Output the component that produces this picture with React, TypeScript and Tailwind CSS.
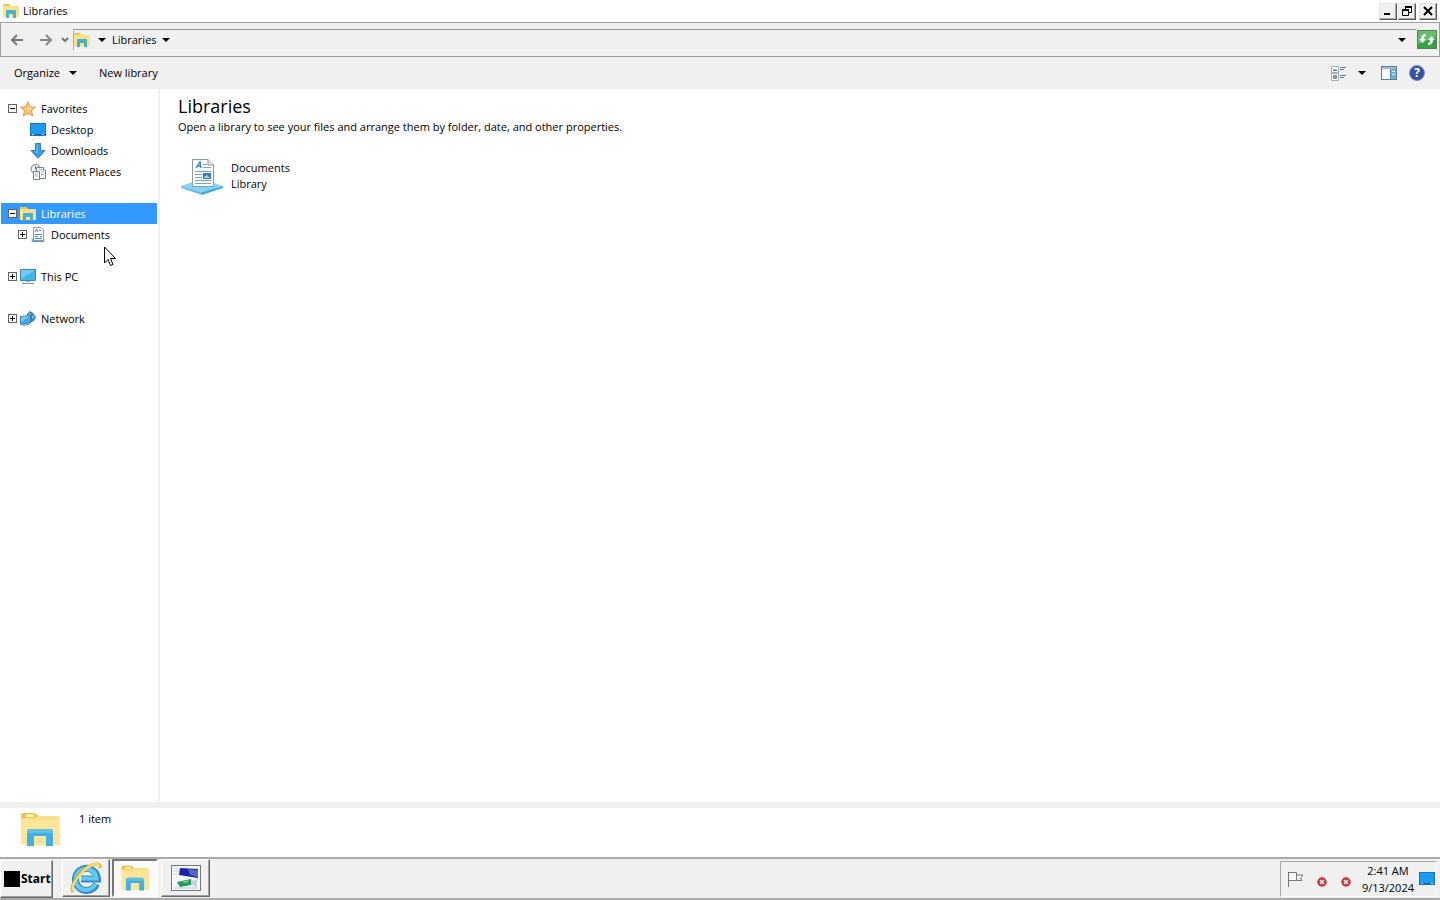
import type { ReactNode } from "react";

function FolderIcon({ className }: { className: string }) {
  return (
    <svg viewBox="0 0 40 36" className={className} preserveAspectRatio="none" aria-hidden="true">
      <path d="M1 3Q1 1 4 1H14L18 4H38Q40 4 40 7V31Q40 33 38 33H1Z" fill="#fbe08c" />
      <path d="M1 8H40V31Q40 33 38 33H1Z" fill="#fde69a" />
      <path d="M1 3Q1 1 4 1H14L19 4L14 6H1Z" fill="#e8c24e" />
      <path d="M6 2.5H13L15 4L13 5H6Z" fill="#fff3bd" />
      <path d="M7 20Q7 17 10 17H30Q33 17 33 20V34H26V24H14V34H7Z" fill="#3eb2e4" />
      <path d="M7 20Q7 17 10 17H30Q33 17 33 20V21H7Z" fill="#62bfe0" />
    </svg>
  );
}

function SmallFolderIcon() {
  return (
    <svg viewBox="0 0 16 14" className="h-[14px] w-4 shrink-0" aria-hidden="true">
      <path d="M0 1Q0 0 1 0H6L8 2H15Q16 2 16 3V13H0Z" fill="#fde08a" />
      <path d="M0 1Q0 0 1 0H6L7 1L6 2H0Z" fill="#edc656" />
      <path d="M3 7Q3 6 4 6H12Q13 6 13 7V14H10V10H6V14H3Z" fill="#45b3cf" />
    </svg>
  );
}

function Caret() {
  return (
    <svg viewBox="0 0 8 4" className="h-1 w-2 shrink-0" aria-hidden="true">
      <path d="M0 0H8L4 4Z" fill="#000" />
    </svg>
  );
}

function StarIcon() {
  return (
    <svg viewBox="0 0 16 16" className="size-4 shrink-0" aria-hidden="true">
      <path d="M8 .8L10.1 5.8L15.5 6.2L11.4 9.7L12.8 15L8 12.2L3.2 15L4.6 9.7L.5 6.2L5.9 5.8Z" fill="#ffc673" stroke="#dc9a4c" />
      <path d="M8 3L9.3 6.8L13 7L8 9Z" fill="#ffe0a8" />
    </svg>
  );
}

function DesktopIcon({ className }: { className: string }) {
  return (
    <svg viewBox="0 0 16 16" className={className} aria-hidden="true">
      <rect x=".5" y="1.5" width="15" height="12" fill="#1c9cf0" stroke="#1779bd" />
      <path d="M1 12H15V13H1Z" fill="#0d67aa" />
      <path d="M2 12H4V13H2ZM12 12H14V13H12Z" fill="#a3d8ff" />
    </svg>
  );
}

function DownloadIcon() {
  return (
    <svg viewBox="0 0 16 16" className="size-4 shrink-0" aria-hidden="true">
      <path d="M5.5 .5H10.5V7.5H15L8 15.3L1 7.5H5.5Z" fill="#3b9be5" stroke="#2b82c9" />
      <path d="M6.5 1.5H8V11L4 8.5H6.5Z" fill="#65b6ef" />
    </svg>
  );
}

function RecentIcon() {
  return (
    <svg viewBox="0 0 16 16" className="size-4 shrink-0" fill="none" stroke="#718092" aria-hidden="true">
      <circle cx="5.5" cy="5" r="4.5" fill="#edf2f5" />
      <path d="M5.5 2V5H8" />
      <path d="M6.5 3.5H13.5V6H15.5V14.5H8.5V12.5H6.5Z" fill="#f7fafc" />
      <path d="M3.5 7.5H9.5V15.5H3.5Z" fill="#fff" />
      <path d="M5 10H8M5 12H8M11 8H14M11 10.5H14M9 5.5H12" stroke="#8eaed0" />
    </svg>
  );
}

function DocumentIcon() {
  return (
    <svg viewBox="0 0 16 16" className="size-4 shrink-0" aria-hidden="true">
      <path d="M1 13L3 11H13L15 13L13 15H3Z" fill="#74c6ed" />
      <path d="M3.5 .5H11L13.5 3V13.5H3.5Z" fill="#f7fbff" stroke="#8a9bae" />
      <path d="M5 5L6.5 2L8 5M9 3.5H11M5 7.5H12M5 9.5H8M5 11.5H12M10 9.5H12" fill="none" stroke="#4588bd" />
      <path d="M2 14.5H14" stroke="#5699bd" />
    </svg>
  );
}

function ComputerIcon() {
  return (
    <svg viewBox="0 0 16 16" className="size-4 shrink-0" aria-hidden="true">
      <path d="M.5 .5H15.5V11.5H.5Z" fill="#40b3ed" stroke="#4687ae" />
      <path d="M1 1H15L1 10Z" fill="#71caf3" />
      <path d="M6 12H10V13H6Z" fill="#a4b7c2" />
      <path d="M2 14.5H14" stroke="#6b9db8" />
    </svg>
  );
}

function NetworkIcon() {
  return (
    <svg viewBox="0 0 16 16" className="size-4 shrink-0" aria-hidden="true">
      <path d="M7 3L10 0L13 2L16 6L14 10L9 12L6 8Z" fill="#3682b5" />
      <path d="M8 3L10 2L11 4L9 5ZM12 5L14 4L14 7L12 8Z" fill="#78bce0" />
      <path d="M.5 5.5L10.5 4.5V12L.5 13.5Z" fill="#43abe5" stroke="#397fae" />
      <path d="M1 6L10 5L1 11Z" fill="#79c9f2" />
      <path d="M3 14.5L9 13.5" stroke="#5b8bac" />
    </svg>
  );
}

function LibraryIcon() {
  return (
    <svg viewBox="0 0 44 38" className="h-[38px] w-11 shrink-0" aria-hidden="true">
      <path d="M1 29L22 22L43 29L22 35Z" fill="#83d3f5" />
      <path d="M1 29L22 35V38L1 31Z" fill="#67bfe5" />
      <path d="M22 35L43 29V31L22 38Z" fill="#43a9d8" />
      <path d="M12.5 2.5H28L33.5 8V29.5H12.5Z" fill="#fafcff" stroke="#8f999f" />
      <path d="M28 2.5V8H33.5" fill="#dce4ea" stroke="#8f999f" />
      <path d="M16 11L20 5L21 11M17 9H21" fill="none" stroke="#3184bc" strokeWidth="1.3" />
      <path d="M23 7.5H27M23 10.5H31M15 14.5H31M15 17.5H22M15 20.5H22M15 23.5H31M15 26.5H31" stroke="#74aac8" />
      <path d="M23 16H31V22H23Z" fill="#397daf" />
      <path d="M24 20L27 18L30 21H24Z" fill="#a7d4d7" />
    </svg>
  );
}

function Expander({ open }: { open: boolean }) {
  return (
    <svg viewBox="0 0 9 9" className="size-[9px] shrink-0" aria-hidden="true">
      <rect x=".5" y=".5" width="8" height="8" fill="#fff" stroke="#626262" />
      <path d={open ? "M2 4.5H7" : "M2 4.5H7M4.5 2V7"} stroke="#000" />
    </svg>
  );
}

type Node = { label: string; icon: ReactNode; open?: boolean; nested?: boolean; selected?: boolean };

const groups: Node[][] = [
  [
    { label: "Favorites", icon: <StarIcon />, open: true },
    { label: "Desktop", icon: <DesktopIcon className="size-4 shrink-0" />, nested: true },
    { label: "Downloads", icon: <DownloadIcon />, nested: true },
    { label: "Recent Places", icon: <RecentIcon />, nested: true },
  ],
  [
    { label: "Libraries", icon: <SmallFolderIcon />, open: true, selected: true },
    { label: "Documents", icon: <DocumentIcon />, open: false, nested: true },
  ],
  [{ label: "This PC", icon: <ComputerIcon />, open: false }],
  [{ label: "Network", icon: <NetworkIcon />, open: false }],
];

function TreeRow({ node }: { node: Node }) {
  return (
    <button
      type="button"
      className={`flex h-[21px] w-full items-center text-left ${node.nested ? "pl-[17px]" : "pl-[7px]"} ${node.selected ? "bg-[#3399ff] text-white" : ""}`}
    >
      <span className="flex w-3 shrink-0">{node.open !== undefined && <Expander open={node.open} />}</span>
      {node.icon}
      <span className="ml-[5px]">{node.label}</span>
    </button>
  );
}

function WindowButton({ label, children }: { label: string; children: ReactNode }) {
  return (
    <button
      type="button"
      aria-label={label}
      className="flex h-[17px] w-[18px] items-center justify-center border border-t-[#e4e4e4] border-r-[#555] border-b-[#555] border-l-[#e4e4e4] bg-[#f0f0f0] shadow-[inset_-1px_-1px_#aaa]"
    >
      <svg viewBox="0 0 12 12" className="size-3" fill="none" stroke="#000" aria-hidden="true">
        {children}
      </svg>
    </button>
  );
}

const raised = "border border-t-white border-r-[#696969] border-b-[#696969] border-l-white bg-[#f0f0f0] shadow-[inset_-1px_-1px_#a0a0a0]";

function ErrorBadge() {
  return (
    <svg viewBox="0 0 10 10" className="size-[10px]" aria-hidden="true">
      <circle cx="5" cy="5" r="4.7" fill="#c9303c" />
      <path d="M3 3L7 7M7 3L3 7" stroke="#fff" strokeWidth="1.5" />
    </svg>
  );
}

export default function App() {
  return (
    <div className="relative flex min-h-screen flex-col bg-white font-['Open_Sans','Noto_Sans',sans-serif] text-[11px] leading-4 text-black">
      <header className="flex h-[22px] items-center pr-[3px] pl-[3px]">
        <SmallFolderIcon />
        <h1 className="ml-1 flex-1">Libraries</h1>
        <div className="flex">
          <WindowButton label="Minimize"><path d="M2 9H8" strokeWidth="2" /></WindowButton>
          <span className="ml-px"><WindowButton label="Restore"><path d="M4.5 2V4M4 2H10.5V7.5H8M1.5 5H7.5V10.5H1.5Z" /><path d="M4 2H11M1 5H8" strokeWidth="2" /></WindowButton></span>
          <span className="ml-[3px]"><WindowButton label="Close"><path d="M2 2L10 10M10 2L2 10" strokeWidth="2" /></WindowButton></span>
        </div>
      </header>

      <nav className="flex h-[35px] items-center border border-[#a0a0a0] bg-[#f0f0f0] pr-[2px] pl-[9px]" aria-label="Address">
        <button type="button" aria-label="Back" className="w-4">
          <svg viewBox="0 0 16 14" className="h-[14px] w-4" fill="none" stroke="#777" strokeWidth="2" aria-hidden="true"><path d="M7 2L2 7L7 12M2 7H13" /></svg>
        </button>
        <button type="button" aria-label="Forward" className="ml-[11px] w-4">
          <svg viewBox="0 0 16 14" className="h-[14px] w-4" fill="none" stroke="#888" strokeWidth="2" aria-hidden="true"><path d="M9 2L14 7L9 12M14 7H3" /></svg>
        </button>
        <button type="button" aria-label="Recent locations" className="ml-2 w-2">
          <svg viewBox="0 0 8 6" className="h-[6px] w-2" fill="none" stroke="#777" strokeWidth="2" aria-hidden="true"><path d="M1 1L4 4L7 1" /></svg>
        </button>
        <div className="ml-1 flex h-[22px] flex-1 items-center border border-t-[#999] border-r-[#f0f0f0] border-b-white border-l-[#cba884] pr-[10px]">
          <SmallFolderIcon />
          <button type="button" aria-label="Root locations" className="ml-2"><Caret /></button>
          <button type="button" className="ml-[6px] flex items-center gap-[5px]">Libraries <Caret /></button>
          <button type="button" aria-label="Address history" className="ml-auto"><Caret /></button>
        </div>
        <button type="button" aria-label="Refresh" className="h-[19px] w-5">
          <svg viewBox="0 0 20 19" className="h-[19px] w-5" aria-hidden="true">
            <rect x=".5" y=".5" width="19" height="18" fill="#36a143" stroke="#4d8754" />
            <path d="M1 1H19V7L1 14Z" fill="#68bd6d" />
            <path d="M2 9H4Q4 4 9 4V6Q7 6 7 9H9L5.5 13ZM18 10H16Q16 15 11 15V13Q13 13 13 10H11L14.5 6Z" fill="#f4fff2" />
          </svg>
        </button>
      </nav>

      <div className="flex h-8 items-center bg-[#f0f0f0] pr-[15px] pl-[14px]">
        <button type="button" className="flex items-center gap-[9px]">Organize <Caret /></button>
        <button type="button" className="ml-[22px]">New library</button>
        <div className="ml-auto flex items-center">
          <button type="button" aria-label="View">
            <svg viewBox="0 0 17 16" className="h-4 w-[17px]" aria-hidden="true">
              <path d="M1.5 1.5H8.5V7.5H1.5ZM1.5 8.5H8.5V15.5H1.5Z" fill="#fff" stroke="#a3acb8" />
              <path d="M3 4.5H7V6H3Z" fill="#4c78b0" /><path d="M3 10H7V14H3Z" fill="#829d87" />
              <path d="M10 2.5H16M10 4.5H14M10 10.5H16M10 12.5H14" stroke="#657b98" />
            </svg>
          </button>
          <button type="button" aria-label="More view options" className="ml-[11px]"><Caret /></button>
          <button type="button" aria-label="Preview pane" className="ml-[15px]">
            <svg viewBox="0 0 16 14" className="h-[14px] w-4" aria-hidden="true">
              <rect x=".5" y=".5" width="15" height="13" fill="#fff" stroke="#527fa4" />
              <path d="M1 1H15V3H1Z" fill="#99bcd4" /><path d="M10 3H15V13H10Z" fill="#69b3d8" />
              <path d="M9.5 3V13" stroke="#648ba6" /><path d="M11 5.5H14M11 8.5H14" stroke="#def5ff" />
            </svg>
          </button>
          <button type="button" aria-label="Help" className="ml-3 flex size-4 items-center justify-center rounded-full border border-[#8790b0] bg-[#3650a5] text-[12px] font-bold text-white">?</button>
        </div>
      </div>

      <div className="flex flex-1">
        <aside className="w-40 shrink-0 border-r-2 border-[#f0f0f0] pt-[9px] pr-px pl-px">
          <div className="flex flex-col gap-[21px]">
            {groups.map((group) => (
              <div key={group[0].label}>{group.map((node) => <TreeRow key={node.label} node={node} />)}</div>
            ))}
          </div>
        </aside>
        <main className="flex-1 pt-[5px] pl-[18px]">
          <h2 className="text-[18px] leading-6">Libraries</h2>
          <p className="pt-px">Open a library to see your files and arrange them by folder, date, and other properties.</p>
          <button type="button" className="mt-[22px] ml-[2px] flex items-center gap-[7px] text-left">
            <LibraryIcon />
            <span>Documents<br />Library</span>
          </button>
        </main>
      </div>

      <section className="flex h-[55px] border-t-[6px] border-[#f0f0f0] pl-5" aria-label="Details">
        <FolderIcon className="mt-1 h-9 w-10" />
        <p className="mt-[3px] ml-[19px]">1 item</p>
      </section>

      <footer className="flex h-[43px] border-t-2 border-b-2 border-t-[#aaa] border-b-[#aaa] bg-[#f0f0f0]">
        <button type="button" className={`mt-px mr-[9px] flex h-[38px] w-[53px] items-center gap-px pl-[3px] text-[12px] font-bold ${raised}`}>
          <span className="size-4 bg-black" />Start
        </button>
        <button type="button" aria-label="Internet Explorer" className={`mr-[2px] flex h-[38px] w-12 items-center justify-center ${raised}`}>
          <svg viewBox="0 0 32 32" className="size-8" aria-hidden="true">
            <path d="M26.5 22A11 11 0 1 1 27.5 17H11" fill="none" stroke="#318ec7" strokeWidth="7" />
            <path d="M25.5 22A10.5 10.5 0 1 1 26.5 16.5H11" fill="none" stroke="#66c8ee" strokeWidth="4" />
            <path d="M3 30C-1 23 12 7 22 3Q30 0 30 6" fill="none" stroke="#d7a92d" strokeWidth="3" />
            <path d="M3 29C0 23 13 7 22 3Q29 0 29 5" fill="none" stroke="#ffe46a" strokeWidth="2" />
          </svg>
        </button>
        <button type="button" aria-label="File Explorer" className="flex h-[38px] w-[46px] items-center justify-center border-2 border-t-[#777] border-r-white border-b-white border-l-[#777] bg-[#fafafa]">
          <FolderIcon className="h-[27px] w-7" />
        </button>
        <button type="button" aria-label="Server configuration" className={`ml-[3px] flex h-[38px] w-[49px] items-center justify-center ${raised}`}>
          <svg viewBox="0 0 30 26" className="h-[26px] w-[30px]" aria-hidden="true">
            <rect x=".5" y=".5" width="29" height="25" fill="#f3f8fb" stroke="#777" />
            <path d="M2 3H7M2 6H8M2 9H7" stroke="#c5d2da" />
            <path d="M9 3L27 4V13L8 10Z" fill="#2022aa" /><path d="M17 4L27 5V12L19 10Z" fill="#5368c5" />
            <path d="M6 17L20 14V20L9 22Z" fill="#27975b" /><path d="M10 17L18 15L16 18Z" fill="#77d29b" />
            <path d="M20 16L26 14V22L20 20Z" fill="#c3d3dd" /><path d="M3 23H27" stroke="#b8c7d0" />
          </svg>
        </button>
        <div className="mt-[2px] mr-[3px] ml-auto flex h-9 items-center border border-t-[#aaa] border-r-white border-b-white border-l-[#aaa] pl-[5px]">
          <button type="button" aria-label="Action Center">
            <svg viewBox="0 0 18 18" className="size-[18px]" fill="#fafafa" stroke="#777" aria-hidden="true"><path d="M2.5 2V17M2.5 2.5H10.5V10.5H2.5M10.5 5H17L14.5 8L16 10.5H10.5" /></svg>
          </button>
          <button type="button" aria-label="Network disconnected" className="mt-[6px] ml-[13px]"><ErrorBadge /></button>
          <button type="button" aria-label="Audio unavailable" className="mt-[6px] ml-[14px]"><ErrorBadge /></button>
          <time className="ml-[11px] text-center leading-[17px]">2:41 AM<br />9/13/2024</time>
          <button type="button" aria-label="Show desktop" className="mr-px ml-[5px]"><DesktopIcon className="size-4" /></button>
        </div>
      </footer>

      <svg viewBox="0 0 12 20" className="pointer-events-none absolute top-[246px] left-[104px] h-5 w-3" aria-hidden="true">
        <path d="M.5 1V17L4 13.5L6.5 19.5L9 18.5L6.5 12.5H11.5Z" fill="#fff" stroke="#000" />
      </svg>
    </div>
  );
}
